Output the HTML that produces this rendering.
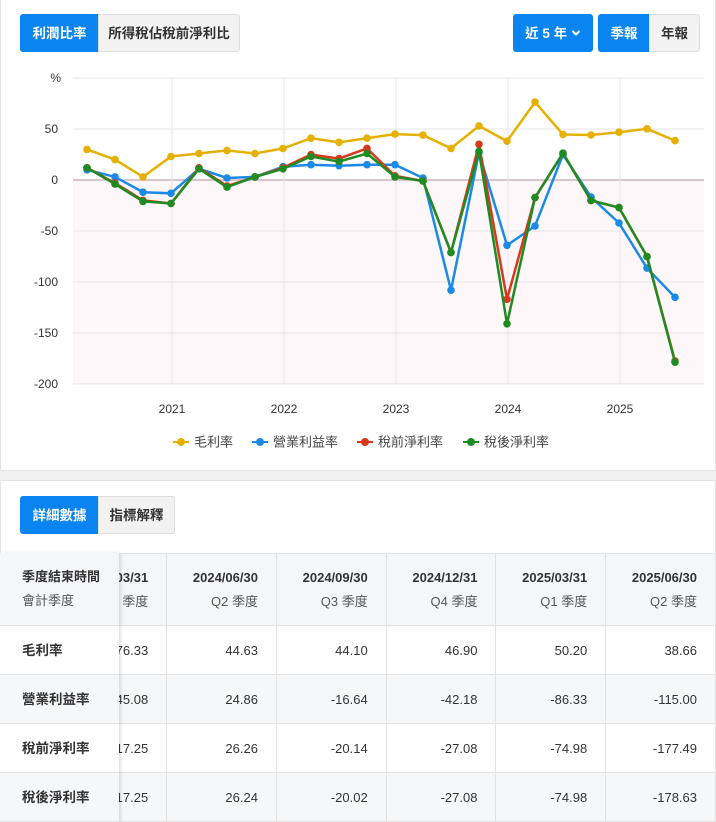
<!DOCTYPE html>
<html><head><meta charset="utf-8">
<style>
*{box-sizing:border-box;margin:0;padding:0}
body{width:716px;height:820px;overflow:hidden;background:#f0f0f0;font-family:"Liberation Sans","Noto Sans CJK TC",sans-serif;color:#333}
.card{position:absolute;left:0;right:0;background:#fff;border:1px solid #e4e4e4}
.btn{position:absolute;height:38px;line-height:38px;font-size:13.5px;font-weight:bold;text-align:center;border:1px solid #ddd;background:#f2f2f2;color:#333}
.btn.on{background:#0a84f0;color:#fff;border-color:#0a84f0}
table{border-collapse:collapse;position:absolute;left:0;top:553px}
td{border:1px solid #e2e2e2;height:49px;font-size:13px;text-align:right;padding-right:18px;width:110px}
tr.h td{height:72px;background:#f5f6f8;line-height:24px;font-weight:bold}
tr.h td span{font-weight:normal;color:#555}
tr.g td{background:#f6f7f9}
.fc{position:absolute;left:0;top:553px;width:119px;box-shadow:2px 0 3px rgba(0,0,0,.12)}
.fc div{height:49px;line-height:49px;padding-left:22px;font-weight:bold;font-size:13.5px;border-bottom:1px solid #e2e2e2;background:#fff}
.fc div.g{background:#f6f7f9}
</style></head><body>
<div class="card" style="top:0;height:471px;border-top:none">
<div class="btn on" style="left:19px;top:14px;width:79px;border-radius:3px 0 0 3px">利潤比率</div>
<div class="btn" style="left:97px;top:14px;width:142px;border-radius:0 3px 3px 0">所得稅佔稅前淨利比</div>
<div class="btn on" style="left:512px;top:14px;width:80px;border-radius:3px">近 5 年 <svg width="10" height="8" viewBox="0 0 10 8" style="vertical-align:1px"><path d="M1.5 2 L5 5.5 L8.5 2" stroke="#fff" stroke-width="2" fill="none"/></svg></div>
<div class="btn on" style="left:597px;top:14px;width:52px;border-radius:3px 0 0 3px">季報</div>
<div class="btn" style="left:648px;top:14px;width:51px;border-radius:0 3px 3px 0">年報</div>
<svg id="ch" width="716" height="470" style="position:absolute;left:0;top:0" font-family="Liberation Sans, sans-serif" font-size="12"></svg>
</div>
<div class="card" style="top:480px;height:340px">
<div class="btn on" style="left:19px;top:15px;width:79px;border-radius:3px 0 0 3px">詳細數據</div>
<div class="btn" style="left:97px;top:15px;width:77px;border-radius:0 3px 3px 0">指標解釋</div>
</div>
<table>
<tr class="h"><td style="width:167px">2024/03/31<br><span>Q1 季度</span></td><td>2024/06/30<br><span>Q2 季度</span></td><td>2024/09/30<br><span>Q3 季度</span></td><td>2024/12/31<br><span>Q4 季度</span></td><td>2025/03/31<br><span>Q1 季度</span></td><td>2025/06/30<br><span>Q2 季度</span></td></tr>
<tr><td style="width:167px">76.33</td><td>44.63</td><td>44.10</td><td>46.90</td><td>50.20</td><td>38.66</td></tr>
<tr class="g"><td style="width:167px">-45.08</td><td>24.86</td><td>-16.64</td><td>-42.18</td><td>-86.33</td><td>-115.00</td></tr>
<tr><td style="width:167px">-17.25</td><td>26.26</td><td>-20.14</td><td>-27.08</td><td>-74.98</td><td>-177.49</td></tr>
<tr class="g"><td style="width:167px">-17.25</td><td>26.24</td><td>-20.02</td><td>-27.08</td><td>-74.98</td><td>-178.63</td></tr>
</table>
<div class="fc">
<div style="height:73px;line-height:24px;padding-top:12px;background:#f5f6f8;font-size:13px">季度結束時間<br><span style="font-weight:normal;color:#555">會計季度</span></div>
<div>毛利率</div><div class="g">營業利益率</div><div>稅前淨利率</div><div class="g">稅後淨利率</div>
</div>
<script>
var s='';
function Y(v){return 180-v*1.02}
s+='<rect x="72" y="180" width="631" height="204" fill="#fef7f9"/>';
[78,129,180,231,282,333,384].forEach(function(y){s+='<line x1="72" x2="703" y1="'+y+'" y2="'+y+'" stroke="'+(y==180?'#d0b4bd':'#e6e6e6')+'" stroke-width="'+(y==180?1.5:1)+'"/>'});
[171,283,395,507,619].forEach(function(x,i){s+='<line x1="'+x+'" x2="'+x+'" y1="78" y2="384" stroke="#e6e6e6"/><text x="'+x+'" y="413" text-anchor="middle" fill="#333">'+(2021+i)+'</text>'});
[['%',78],['50',129],['0',180],['-50',231],['-100',282],['-150',333],['-200',384]].forEach(function(a){s+='<text x="'+(a[0]=='%'?60:57)+'" y="'+(a[1]+4)+'" text-anchor="end" fill="#333">'+a[0]+'</text>'});
var D=[['#e6b000',[30,20,3,23,26,29,26,31,41,37,41,45,44,31,53,38,76.33,44.63,44.10,46.90,50.20,38.66]],
['#1a8ae6',[10,3,-12,-13,11,2,3,13,15,14,15,15,2,-108,27,-64,-45.08,24.86,-16.64,-42.18,-86.33,-115]],
['#d8381c',[12,-3,-20,-23,12,-6,3,12,25,21,31,4,-1,-71,35,-117,-17.25,26.26,-20.14,-27.08,-74.98,-177.49]],
['#1e8c22',[12,-4,-21,-23,11,-7,3,11,23,18,26,3,-1,-71,28,-141,-17.25,26.24,-20.02,-27.08,-74.98,-178.63]]];
D.forEach(function(d){var p=d[1].map(function(v,i){return (86+i*28)+','+Y(v).toFixed(1)});
s+='<polyline points="'+p.join(' ')+'" fill="none" stroke="'+d[0]+'" stroke-width="2.5"/>';
p.forEach(function(q){var c=q.split(',');s+='<circle cx="'+c[0]+'" cy="'+c[1]+'" r="3.8" fill="'+d[0]+'"/>'})});
[['毛利率',172],['營業利益率',251],['稅前淨利率',356],['稅後淨利率',462]].forEach(function(l,i){s+='<line x1="'+l[1]+'" x2="'+(l[1]+16)+'" y1="442" y2="442" stroke="'+D[i][0]+'" stroke-width="2"/><circle cx="'+(l[1]+8)+'" cy="442" r="4" fill="'+D[i][0]+'"/><text x="'+(l[1]+21)+'" y="446.5" fill="#444" font-size="13" font-family="Liberation Sans, Noto Sans CJK TC, sans-serif">'+l[0]+'</text>'});
document.getElementById('ch').innerHTML=s;
</script>
</body></html>
